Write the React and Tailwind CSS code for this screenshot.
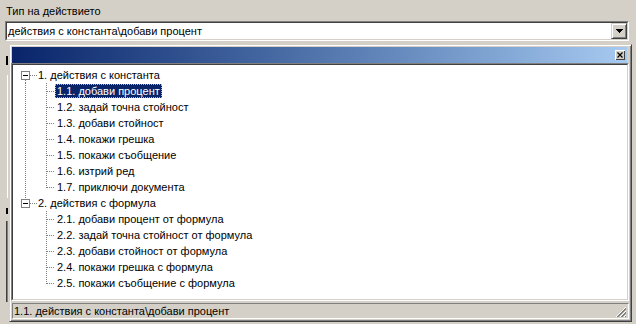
import React from "react";

const FONT = { fontFamily: '"Liberation Sans", Arial, sans-serif' };

const group1 = [
  "1.1. добави процент",
  "1.2. задай точна стойност",
  "1.3. добави стойност",
  "1.4. покажи грешка",
  "1.5. покажи съобщение",
  "1.6. изтрий ред",
  "1.7. приключи документа",
];
const group2 = [
  "2.1. добави процент от формула",
  "2.2. задай точна стойност от формула",
  "2.3. добави стойност от формула",
  "2.4. покажи грешка с формула",
  "2.5. покажи съобщение с формула",
];

const DOT = "#808080";

function VLine({ x, y1, y2 }) {
  return (
    <line
      x1={x + 0.5}
      y1={y1}
      x2={x + 0.5}
      y2={y2}
      stroke={DOT}
      strokeWidth="1"
      strokeDasharray="1 1"
      shapeRendering="crispEdges"
    />
  );
}
function HLine({ y, x1, x2 }) {
  return (
    <line
      x1={x1}
      y1={y + 0.5}
      x2={x2}
      y2={y + 0.5}
      stroke={DOT}
      strokeWidth="1"
      strokeDasharray="1 1"
      shapeRendering="crispEdges"
    />
  );
}

function RootRow({ label, first, last }) {
  return (
    <div className="flex h-[16px] items-center">
      <svg width="25" height="16" className="shrink-0">
        {!first && <VLine x={12} y1={0} y2={4} />}
        {!last && <VLine x={12} y1={13} y2={16} />}
        <HLine y={8} x1={17} x2={24} />
        <rect x="8.5" y="4.5" width="8" height="8" fill="#fff" stroke={DOT} shapeRendering="crispEdges" />
        <line x1="10" y1="8.5" x2="15" y2="8.5" stroke="#000" shapeRendering="crispEdges" />
      </svg>
      <span className="leading-[14px] text-black">{label}</span>
    </div>
  );
}

function ChildRow({ label, lastChild, rootContinues, selected }) {
  return (
    <div className="flex h-[16px] items-center">
      <svg width="42" height="16" className="shrink-0">
        {rootContinues && <VLine x={12} y1={0} y2={16} />}
        <VLine x={33} y1={0} y2={lastChild ? 9 : 16} />
        <HLine y={8} x1={34} x2={42} />
      </svg>
      {selected ? (
        <span className="h-[14px] bg-[#0a246a] px-[2px] leading-[14px] text-white outline-1 -outline-offset-1 outline-dotted outline-[#b8b890]">
          {label}
        </span>
      ) : (
        <span className="px-[2px] leading-[14px] text-black">{label}</span>
      )}
    </div>
  );
}

export default function App() {
  return (
    <div className="relative h-[324px] w-[636px] overflow-hidden bg-[#d4d0c8] text-[11px] text-black" style={FONT}>
      {/* background form */}
      <div className="flex flex-col">
        <div className="ml-[6px] mt-[5px] h-[13px] leading-[13px]">Тип на действието</div>
        <div className="ml-[5px] mt-[3px] flex h-[20px] w-[624px] border-t border-l border-t-[#808080] border-l-[#808080] border-r border-b border-r-white border-b-white">
          <div className="flex flex-1 border-t border-l border-t-[#404040] border-l-[#404040] border-r border-b border-r-[#d4d0c8] border-b-[#d4d0c8] bg-white">
            <div className="flex-1 pl-[1px] leading-[16px]">действия с константа\добави процент</div>
            <div className="flex h-[16px] w-[16px] items-center justify-center border-t border-l border-t-[#d4d0c8] border-l-[#d4d0c8] border-r border-b border-r-[#404040] border-b-[#404040] bg-[#d4d0c8] shadow-[inset_1px_1px_0_#fff,inset_-1px_-1px_0_#808080]">
              <svg width="7" height="4">
                <polygon points="0,0 7,0 3.5,4" fill="#000" shapeRendering="crispEdges" />
              </svg>
            </div>
          </div>
        </div>
        <div className="ml-[6px] mt-[15px] h-[9px] w-[2px] bg-[#000]" />
        <div className="ml-[7px] mt-[10px] h-[123px] w-[1px] bg-white" />
        <div className="ml-[6px] mt-[10px] h-[6px] w-[2px] bg-[#000]" />
        <div className="ml-[6px] mt-[7px] flex h-[81px] w-[2px]">
          <div className="w-[1px] bg-[#404040]" />
          <div className="w-[1px] bg-[#808080]" />
        </div>
      </div>

      {/* dropdown popup */}
      <div className="absolute left-[9px] top-[44px] flex h-[278px] w-[623px] flex-col border-t border-l border-t-[#d4d0c8] border-l-[#d4d0c8] border-r border-b border-r-[#404040] border-b-[#404040] bg-[#d4d0c8] shadow-[inset_1px_1px_0_#fff,inset_-1px_-1px_0_#808080]">
        <div className="ml-[2px] mr-[4px] mt-[2px] flex h-[16px] items-center justify-end bg-linear-to-r from-[#0a246a] to-[#a6caf0] pr-[2px]">
          <div className="flex h-[10px] w-[10px] items-center justify-center bg-[#d4d0c8] shadow-[inset_1px_1px_0_#fff,inset_-1px_-1px_0_#404040]">
            <svg width="6" height="6">
              <path d="M0.5 0.5 L5.5 5.5 M5.5 0.5 L0.5 5.5" stroke="#000" strokeWidth="1.2" />
            </svg>
          </div>
        </div>
        <div className="ml-[1px] mr-[2px] flex h-[238px] flex-col border-t border-l border-t-[#808080] border-l-[#808080] border-r border-b border-r-white border-b-white">
          <div className="flex flex-1 flex-col border-t border-l border-t-[#404040] border-l-[#404040] border-r border-b border-r-[#d4d0c8] border-b-[#d4d0c8] bg-white pt-[2px]">
            <RootRow label="1. действия с константа" first />
            {group1.map((t, i) => (
              <ChildRow key={t} label={t} rootContinues lastChild={i === group1.length - 1} selected={i === 0} />
            ))}
            <RootRow label="2. действия с формула" last />
            {group2.map((t, i) => (
              <ChildRow key={t} label={t} lastChild={i === group2.length - 1} />
            ))}
          </div>
        </div>
        <div className="ml-[2px] mr-[2px] mt-[2px] flex h-[16px] items-center border-t border-l border-t-[#808080] border-l-[#808080] border-r border-b border-r-white border-b-white">
          <div className="flex-1 pl-[1px] leading-[14px]">1.1. действия с константа\добави процент</div>
          <svg width="12" height="12" className="mr-[1px] mt-[2px] self-end">
            <path d="M11 1 L1 11 M11 5 L5 11 M11 9 L9 11" stroke="#fff" strokeWidth="1" shapeRendering="crispEdges" />
            <path d="M11 2 L2 11 M11 3 L3 11 M11 6 L6 11 M11 7 L7 11 M11 10 L10 11" stroke="#808080" strokeWidth="1" shapeRendering="crispEdges" />
          </svg>
        </div>
      </div>
    </div>
  );
}
